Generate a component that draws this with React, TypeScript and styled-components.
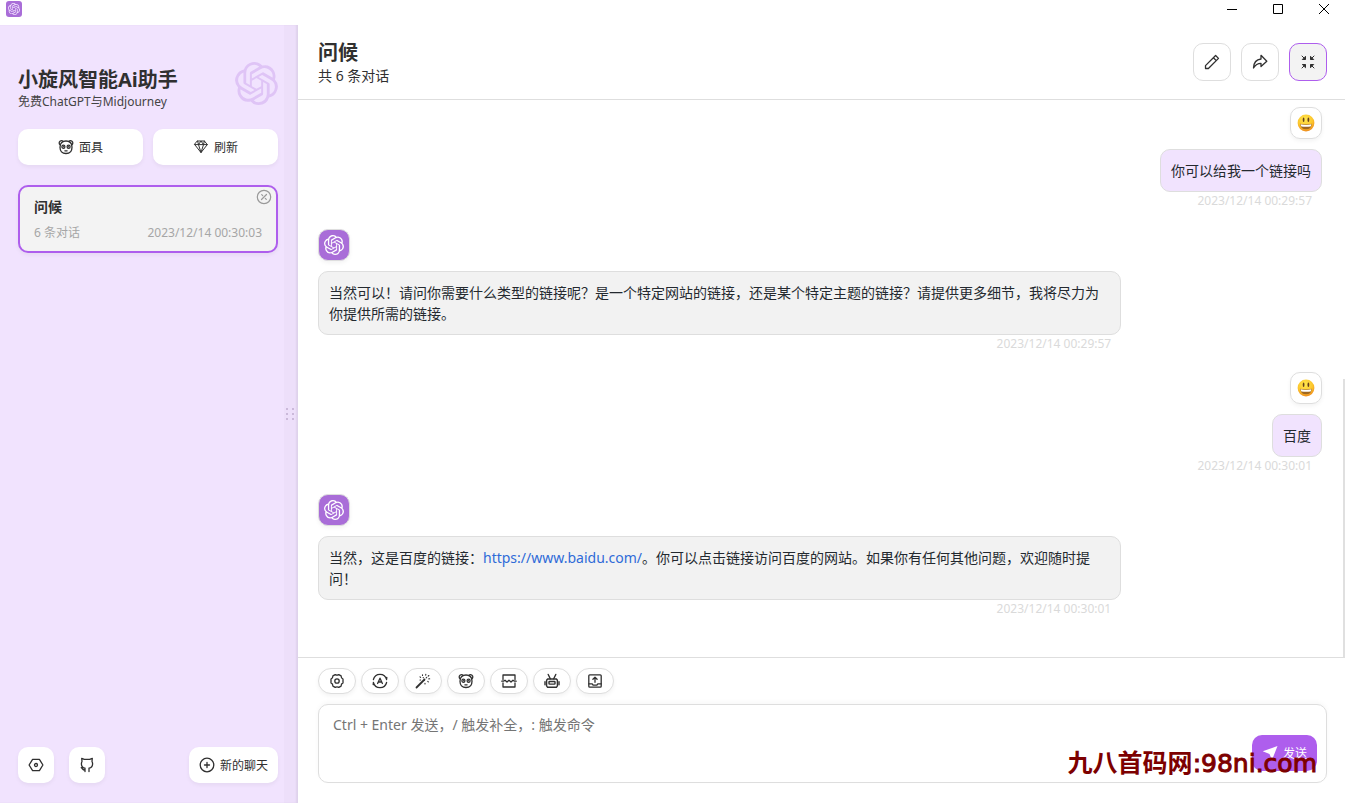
import React from "react";
import styled, { createGlobalStyle, css } from "styled-components";
import { SiOpenai } from "react-icons/si";

const purple = "#ae5eed";
const lilac = "#f1e3fe";
const line = "#dedede";
const ink = "#303030";

const GlobalStyle = createGlobalStyle`
  * { box-sizing: border-box; }
  body {
    margin: 0;
    background: #fff;
    color: ${ink};
    font-family: "Noto Sans", "Noto Sans CJK SC", sans-serif;
    font-size: 14px;
  }
  button, textarea { font: inherit; color: inherit; }
  button { cursor: pointer; padding: 0; }
  svg { display: block; flex: none; }
`;

const Shell = styled.div`
  height: 100vh;
  display: flex;
  flex-direction: column;
  overflow: hidden;
`;

const TitleBar = styled.header`
  flex: none;
  height: 25px;
  display: flex;
  align-items: flex-start;
  justify-content: space-between;
  padding: 0 12px 0 6px;
`;

const AppBadge = styled.span`
  width: 16px;
  height: 16px;
  margin-top: 1px;
  border-radius: 3px;
  background: #a96dd8;
  color: #f1e3fe;
  display: grid;
  place-items: center;
`;

const WindowControls = styled.div`
  display: flex;
  gap: 28px;
`;

const WindowButton = styled.button`
  width: 18px;
  height: 18px;
  border: 0;
  background: none;
  display: grid;
  place-items: center;
  color: #000;
`;

const Body = styled.div`
  flex: 1;
  min-height: 0;
  display: flex;
`;

const Sidebar = styled.aside`
  flex: none;
  width: 298px;
  display: flex;
  background: ${lilac};
  box-shadow: inset -2px 0 2px rgba(0, 0, 0, 0.06);
`;

const SidebarContent = styled.div`
  flex: 1;
  display: flex;
  flex-direction: column;
  padding: 37px 6px 20px 18px;
`;

const DragHandle = styled.div`
  width: 14px;
  display: grid;
  place-items: center;
  background: rgba(0, 0, 0, 0.015);
  color: #cbb9da;
`;

const Brand = styled.div`
  display: flex;
  justify-content: space-between;
  color: #dfc4f6;
`;

const BrandTitle = styled.h1`
  margin: 5px 0 0;
  font-size: 20px;
  line-height: 26px;
  color: ${ink};
`;

const BrandSub = styled.p`
  margin: 0;
  font-size: 12px;
  line-height: 18px;
  color: #444;
`;

const ButtonPair = styled.div`
  display: grid;
  grid-template-columns: 1fr 1fr;
  gap: 10px;
  margin-top: 18px;
`;

const SideButton = styled.button<{ $square?: boolean }>`
  height: 36px;
  ${(p) => (p.$square ? "width: 36px;" : "padding: 0 10px;")}
  display: flex;
  align-items: center;
  justify-content: center;
  gap: 5px;
  border: 0;
  border-radius: 10px;
  background: #fff;
  font-size: 12px;
  box-shadow: 0 2px 4px rgba(0, 0, 0, 0.05);
`;

const ChatCard = styled.div`
  position: relative;
  margin-top: 20px;
  padding: 9px 14px;
  border: 2px solid ${purple};
  border-radius: 10px;
  background: #f3f3f3;
  box-shadow: 0 2px 4px rgba(0, 0, 0, 0.05);
`;

const CardTitle = styled.h2`
  margin: 0;
  font-size: 14px;
  line-height: 22px;
`;

const CardInfo = styled.div`
  display: flex;
  justify-content: space-between;
  margin-top: 6px;
  font-size: 12px;
  line-height: 18px;
  color: #a6a6a6;
`;

const CardDelete = styled.button`
  position: absolute;
  top: 2px;
  right: 4px;
  border: 0;
  background: none;
  color: #999;
`;

const SidebarFoot = styled.div`
  margin-top: auto;
  display: flex;
  gap: 15px;
  & > :last-child { margin-left: auto; }
`;

const Main = styled.main`
  flex: 1;
  min-width: 0;
  display: flex;
  flex-direction: column;
`;

const ChatHeader = styled.div`
  flex: none;
  display: flex;
  align-items: center;
  justify-content: space-between;
  height: 75px;
  padding: 0 18px 0 20px;
  border-bottom: 1px solid ${line};
`;

const ChatTitle = styled.h2`
  margin: 2px 0 0;
  font-size: 20px;
  line-height: 26px;
`;

const ChatSub = styled.p`
  margin: 0;
  line-height: 20px;
`;

const HeaderActions = styled.div`
  display: flex;
  gap: 10px;
`;

const HeaderButton = styled.button<{ $active?: boolean }>`
  width: 38px;
  height: 38px;
  display: grid;
  place-items: center;
  border: 1px solid ${(p) => (p.$active ? purple : line)};
  border-radius: 10px;
  background: ${(p) => (p.$active ? "#f3f3f3" : "#fff")};
`;

const Scroller = styled.div`
  flex: 1;
  min-height: 0;
  display: flex;
  overflow: hidden;
`;

const Messages = styled.div`
  flex: 1;
  display: flex;
  flex-direction: column;
  gap: 20px;
  padding: 7px 21px 0 20px;
`;

const ScrollTrack = styled.div`
  width: 2px;
  display: flex;
  align-items: flex-end;
`;

const ScrollThumb = styled.div`
  width: 2px;
  height: 50%;
  background: #e0e0e0;
`;

const MessageRow = styled.article<{ $user?: boolean }>`
  display: flex;
  flex-direction: column;
  max-width: 80%;
  align-self: ${(p) => (p.$user ? "flex-end" : "flex-start")};
  align-items: ${(p) => (p.$user ? "flex-end" : "flex-start")};
`;

const Avatar = styled.div<{ $bot?: boolean }>`
  width: 32px;
  height: 32px;
  display: grid;
  place-items: center;
  border: 1px solid ${line};
  border-radius: 10px;
  box-shadow: 0 2px 4px rgba(0, 0, 0, 0.05);
  ${(p) => p.$bot && css`background: #a96dd8; color: #fff;`}
`;

const Bubble = styled.div<{ $user?: boolean }>`
  margin-top: 10px;
  padding: 10px;
  border: 1px solid ${line};
  border-radius: 10px;
  background: ${(p) => (p.$user ? lilac : "#f2f2f2")};
  color: #24292f;
  line-height: 21px;
`;

const BubbleLink = styled.a`
  color: #2f6bd8;
  text-decoration: none;
`;

const Stamp = styled.time`
  align-self: flex-end;
  padding-right: 10px;
  font-size: 12px;
  line-height: 17px;
  white-space: nowrap;
  color: #dadada;
`;

const Composer = styled.div`
  flex: none;
  padding: 10px 18px 20px 20px;
  border-top: 1px solid ${line};
`;

const ToolRow = styled.div`
  display: flex;
  gap: 5px;
  margin-bottom: 10px;
`;

const ToolButton = styled.button`
  width: 38px;
  height: 26px;
  display: grid;
  place-items: center;
  border: 1px solid ${line};
  border-radius: 13px;
  background: #fff;
  box-shadow: 0 2px 4px rgba(0, 0, 0, 0.05);
`;

const InputWrap = styled.div`
  position: relative;
`;

const Input = styled.textarea`
  display: block;
  width: 100%;
  height: 79px;
  padding: 10px 14px;
  border: 1px solid ${line};
  border-radius: 10px;
  background: #fff;
  line-height: 20px;
  resize: none;
  outline: none;
  box-shadow: 0 -2px 5px rgba(0, 0, 0, 0.03);
  &::placeholder { color: #757575; opacity: 1; }
`;

const SendButton = styled.button`
  position: absolute;
  right: 10px;
  bottom: 12px;
  width: 65px;
  height: 36px;
  display: flex;
  align-items: center;
  justify-content: center;
  gap: 5px;
  border: 0;
  border-radius: 10px;
  background: ${purple};
  color: #fff;
  font-size: 12px;
`;

const Watermark = styled.div`
  position: absolute;
  right: 10px;
  bottom: 4px;
  display: flex;
  align-items: baseline;
  font-size: 25px;
  line-height: 30px;
  font-weight: 700;
  color: #7d0000;
  white-space: nowrap;
  pointer-events: none;
`;

const WatermarkHost = styled.span`
  font-family: "DejaVu Sans", sans-serif;
  font-weight: 400;
  -webkit-text-stroke: 1px currentColor;
`;

type IconProps = { size?: number; children: React.ReactNode; width?: number };

const Icon = ({ size = 16, width = 1.2, children }: IconProps) => (
  <svg
    width={size}
    height={size}
    viewBox="0 0 16 16"
    fill="none"
    stroke="currentColor"
    strokeWidth={width}
    strokeLinejoin="round"
    strokeLinecap="round"
    aria-hidden="true"
  >
    {children}
  </svg>
);

const PandaIcon = () => (
  <Icon width={1.3}>
    <path d="M2.300 6C.8 5 .9 3 2 2.200c1.100-.8 2.500-.5 3.200.4M13.700 6c1.500-1 1.400-3 .3-3.800-1.100-.8-2.500-.5-3.200.4" />
    <path d="M8 2c4 0 6 2.600 6 6.200s-2 6.300-6 6.300-6-2.700-6-6.300S4 2 8 2Z" />
    <ellipse cx="5.400" cy="7.700" rx="1.500" ry="1.600" />
    <ellipse cx="10.600" cy="7.700" rx="1.500" ry="1.600" />
    <path d="M5.500 7.600v.2M10.500 7.600v.2M6.900 11.800h2.200" />
  </Icon>
);

const GemIcon = () => (
  <Icon width={1}>
    <path d="M4.600 2h6.800l2.900 3.600L8 13.600 1.700 5.600ZM1.700 5.600h12.600M4.600 2l.9 3.600L8 13.600l2.500-8L11.400 2M5.500 5.600 8 2l2.500 3.600" />
  </Icon>
);

const HexIcon = () => (
  <Icon width={1.3}>
    <path d="M4.600 2.300h6.800L14.900 8l-3.500 5.700H4.600L1.100 8Z" />
    <circle cx="8" cy="8" r="1.500" />
  </Icon>
);

const GithubIcon = () => (
  <Icon width={1.3}>
    <path d="M6 14.600v-3.400c-2.300-.6-3.600-2-3.600-4.300 0-1 .2-1.700.6-2.400l-.3-3.200 2.600 1.100h5.400l2.600-1.100-.3 3.200c.4.700.6 1.400.6 2.400 0 2.300-1.300 3.700-3.600 4.300v3.400M6 13c-2.400.3-2.400-1.700-3.800-2.300" />
  </Icon>
);

const AddIcon = () => (
  <Icon width={1.3}>
    <circle cx="8" cy="8" r="6.800" />
    <path d="M8 5.500v5M5.500 8h5" />
  </Icon>
);

const DeleteIcon = () => (
  <Icon width={1.2}>
    <circle cx="8" cy="8" r="6.700" />
    <path d="m5.500 10.500 5-5M5.700 5.700l1 1M9.300 9.300l1 1" />
  </Icon>
);

const PencilIcon = () => (
  <Icon width={1.3}>
    <path d="M1.500 14.500v-2.900L11.600 1.500l2.900 2.900L4.400 14.500ZM9.400 3.700l2.900 2.900" />
  </Icon>
);

const ShareIcon = () => (
  <Icon width={1.3}>
    <path d="M9 1.300 14.800 7.200 9 12.500V9.300C5.500 9.300 3.400 10.700 1.500 14c.2-5 2.700-8.500 7.500-9Z" />
  </Icon>
);

const ShrinkIcon = () => (
  <Icon width={1}>
    <path d="m2 2 3 3M14 2l-3 3M2 14l3-3M14 14l-3-3" />
    <path fill="currentColor" d="M5.500 2.700v2.800H2.700ZM10.500 2.700v2.800h2.800ZM5.500 13.300v-2.800H2.700ZM10.500 13.300v-2.800h2.800Z" />
  </Icon>
);

const GearIcon = () => (
  <Icon width={1.3}>
    <path d="M6.200 1.600q1.800 1.200 3.600 0l2.300 1.300q-.1 2.200 1.900 3.200v3.800q-2 1-1.900 3.200l-2.300 1.300q-1.800-1.200-3.600 0l-2.300-1.300Q4 10.900 2 9.900V6.100q2-1 1.900-3.200Z" />
    <circle cx="8" cy="8" r="2.200" />
  </Icon>
);

const AutoIcon = () => (
  <Icon width={1.3}>
    <path d="M1.400 6.500a6.800 6.800 0 0 1 13.200 0M14.600 9.500a6.800 6.800 0 0 1-13.200 0M1.400 9.500l-.2 2M14.600 6.500l.2-2" />
    <path d="M5.600 10.500 8 5.200l2.400 5.300M6.500 9h3" />
  </Icon>
);

const WandIcon = () => (
  <Icon width={1.1}>
    <path d="M1.500 14.500 9.500 6.500" strokeWidth="1.800" />
    <path d="M7.500 1.700v.8M5 3.900l.6.500M5 7h.6M10.800 1.200l-.1.900M13.800 2.500l-.6.600M11.200 4.800l.5-.5M14.700 5.800l-.9.100M12.800 8.400l.5.500M10 10.200v.8M8.200 4.500l.2.300" />
  </Icon>
);

const BreakIcon = () => (
  <Icon width={1.3}>
    <path d="M2 6.500V2h12v4.500M2 10v4h12v-4M.8 8.200h1.700l1.500-1 2 1.800 2-1.800 2 1.800 2-1.800 1.500 1h1.700" />
  </Icon>
);

const RobotIcon = () => (
  <Icon width={1.4}>
    <path d="M3.600 6h8.800l1 1.300v5.600l-1 1.400H3.600l-1-1.400V7.300Z" />
    <rect x="5" y="8.500" width="6" height="2.600" rx=".6" />
    <path d="M6.300 5.800 4.200 1.500M9.700 5.800l2.100-4.300M1 8.700v3M15 8.700v3" />
  </Icon>
);

const UploadIcon = () => (
  <Icon width={1.3}>
    <rect x="1.800" y="1.800" width="12.400" height="12.400" rx="1" />
    <path d="M1.800 10.800h3.400l.9 1.400h3.800l.9-1.400h3.400M8 9.300V4.500M5.900 6.200 8 4.200l2.100 2" />
  </Icon>
);

const SmileIcon = () => (
  <svg width="18" height="18" viewBox="0 0 18 18" aria-hidden="true">
    <defs>
      <radialGradient id="face" cx="45%" cy="30%" r="70%">
        <stop offset="0" stopColor="#ffe94f" />
        <stop offset=".65" stopColor="#fcc52c" />
        <stop offset="1" stopColor="#ee8c1d" />
      </radialGradient>
    </defs>
    <circle cx="9" cy="9" r="8.400" fill="url(#face)" />
    <ellipse cx="6.600" cy="5.800" rx=".9" ry="2.200" fill="#67401c" />
    <ellipse cx="11.400" cy="5.800" rx=".9" ry="2.200" fill="#67401c" />
    <path d="M3.200 9.700q5.800 1.600 11.600 0-.4 5.500-5.800 5.600-5.400-.1-5.800-5.600Z" fill="#a0671f" />
    <path d="M3.700 10.300q5.300 1.300 10.600 0-.1 1.300-.7 2.100-4.600.8-9.200 0-.6-.8-.7-2.100Z" fill="#fff" />
  </svg>
);

const tools = [
  { label: "对话设置", icon: <GearIcon /> },
  { label: "自动主题", icon: <AutoIcon /> },
  { label: "快捷指令", icon: <WandIcon /> },
  { label: "所有面具", icon: <PandaIcon /> },
  { label: "清除聊天", icon: <BreakIcon /> },
  { label: "选择模型", icon: <RobotIcon /> },
  { label: "上传", icon: <UploadIcon /> },
];

const messages = [
  { user: true, time: "2023/12/14 00:29:57", body: "你可以给我一个链接吗" },
  {
    user: false,
    time: "2023/12/14 00:29:57",
    body: "当然可以！请问你需要什么类型的链接呢？是一个特定网站的链接，还是某个特定主题的链接？请提供更多细节，我将尽力为你提供所需的链接。",
  },
  { user: true, time: "2023/12/14 00:30:01", body: "百度" },
  {
    user: false,
    time: "2023/12/14 00:30:01",
    body: (
      <>
        当然，这是百度的链接：
        <BubbleLink href="https://www.baidu.com/">https://www.baidu.com/</BubbleLink>
        。你可以点击链接访问百度的网站。如果你有任何其他问题，欢迎随时提问！
      </>
    ),
  },
];

export default function App() {
  return (
    <Shell lang="zh-CN">
      <GlobalStyle />
      <TitleBar>
        <AppBadge><SiOpenai size={12} /></AppBadge>
        <WindowControls>
          <WindowButton aria-label="最小化">
            <svg width="10" height="10" stroke="currentColor"><path d="M0 5.500h10" /></svg>
          </WindowButton>
          <WindowButton aria-label="最大化">
            <svg width="10" height="10" stroke="currentColor" fill="none"><path d="M.5.500h9v9h-9Z" /></svg>
          </WindowButton>
          <WindowButton aria-label="关闭">
            <svg width="10" height="10" stroke="currentColor"><path d="m0 0 10 10M10 0 0 10" /></svg>
          </WindowButton>
        </WindowControls>
      </TitleBar>
      <Body>
        <Sidebar>
          <SidebarContent>
            <Brand>
              <div>
                <BrandTitle>小旋风智能Ai助手</BrandTitle>
                <BrandSub>免费ChatGPT与Midjourney</BrandSub>
              </div>
              <SiOpenai size={43} />
            </Brand>
            <ButtonPair>
              <SideButton><PandaIcon />面具</SideButton>
              <SideButton><GemIcon />刷新</SideButton>
            </ButtonPair>
            <ChatCard>
              <CardTitle>问候</CardTitle>
              <CardInfo>
                <span>6 条对话</span>
                <time>2023/12/14 00:30:03</time>
              </CardInfo>
              <CardDelete aria-label="删除"><DeleteIcon /></CardDelete>
            </ChatCard>
            <SidebarFoot>
              <SideButton $square aria-label="设置"><HexIcon /></SideButton>
              <SideButton $square aria-label="GitHub"><GithubIcon /></SideButton>
              <SideButton><AddIcon />新的聊天</SideButton>
            </SidebarFoot>
          </SidebarContent>
          <DragHandle>
            <svg width="10" height="12" fill="currentColor" aria-hidden="true">
              <path d="M0 0h2v2H0ZM6 0h2v2H6ZM0 5h2v2H0ZM6 5h2v2H6ZM0 10h2v2H0ZM6 10h2v2H6Z" />
            </svg>
          </DragHandle>
        </Sidebar>
        <Main>
          <ChatHeader>
            <div>
              <ChatTitle>问候</ChatTitle>
              <ChatSub>共 6 条对话</ChatSub>
            </div>
            <HeaderActions>
              <HeaderButton aria-label="重命名"><PencilIcon /></HeaderButton>
              <HeaderButton aria-label="分享"><ShareIcon /></HeaderButton>
              <HeaderButton $active aria-label="退出全屏"><ShrinkIcon /></HeaderButton>
            </HeaderActions>
          </ChatHeader>
          <Scroller>
            <Messages>
              {messages.map((m, i) => (
                <MessageRow key={i} $user={m.user}>
                  <Avatar $bot={!m.user}>{m.user ? <SmileIcon /> : <SiOpenai size={20} />}</Avatar>
                  <Bubble $user={m.user}>{m.body}</Bubble>
                  <Stamp>{m.time}</Stamp>
                </MessageRow>
              ))}
            </Messages>
            <ScrollTrack><ScrollThumb /></ScrollTrack>
          </Scroller>
          <Composer>
            <ToolRow>
              {tools.map((t) => (
                <ToolButton key={t.label} aria-label={t.label}>{t.icon}</ToolButton>
              ))}
            </ToolRow>
            <InputWrap>
              <Input aria-label="消息" placeholder="Ctrl + Enter 发送，/ 触发补全，: 触发命令" />
              <SendButton>
                <svg width="16" height="16" viewBox="0 0 16 16" fill="currentColor" aria-hidden="true">
                  <path d="M15.500 1 10 15 7.500 9 .7 6.200Z" />
                </svg>
                发送
              </SendButton>
              <Watermark>九八首码网<WatermarkHost>:98ni.com</WatermarkHost></Watermark>
            </InputWrap>
          </Composer>
        </Main>
      </Body>
    </Shell>
  );
}
